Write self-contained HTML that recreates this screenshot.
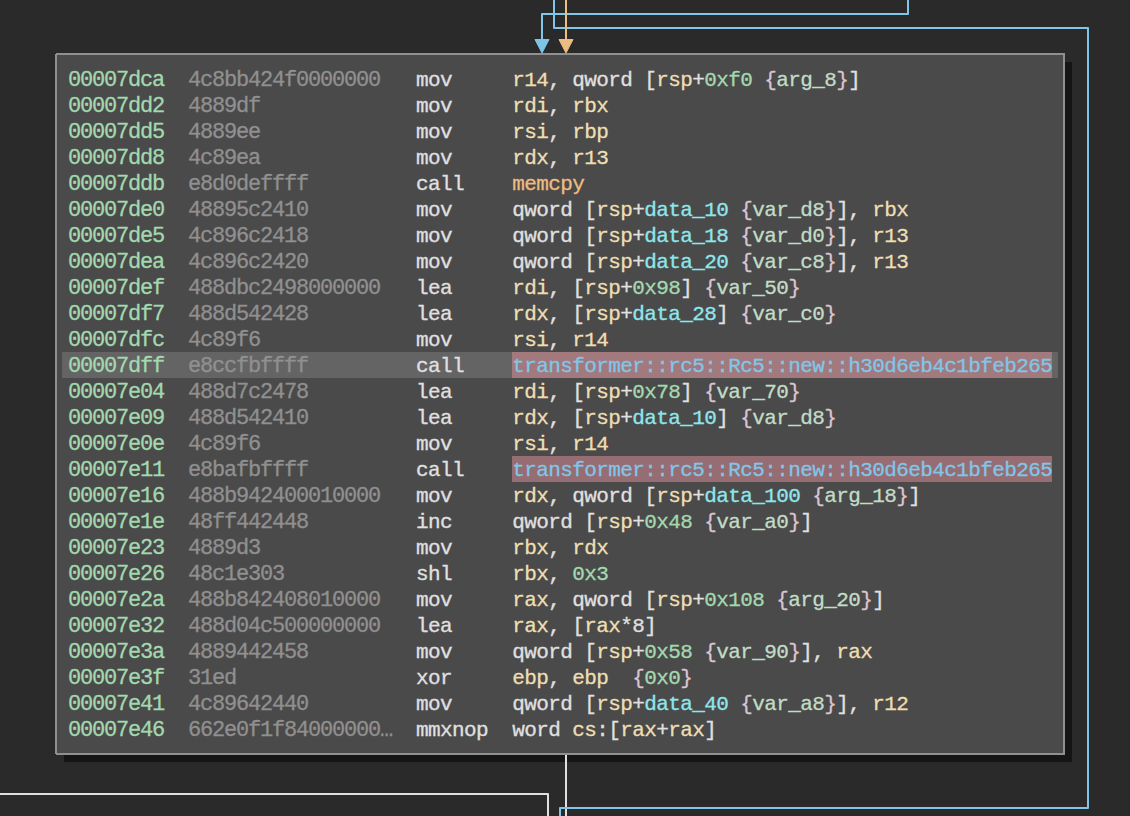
<!DOCTYPE html>
<html><head><meta charset="utf-8">
<style>
html,body{margin:0;padding:0;}
body{width:1130px;height:816px;overflow:hidden;background:#2a2a2a;position:relative;}
#edges{position:absolute;left:0;top:0;}
#shadow{position:absolute;left:64px;top:62px;width:1008px;height:700px;background:#151515;}
#box{position:absolute;left:55px;top:53px;width:1006px;height:698px;border:2px solid #909090;background:#4a4a4a;}
#hl{position:absolute;left:62px;top:352px;width:996px;height:26px;background:#646464;}
.hl2{position:absolute;left:512px;width:540px;height:26px;background:#a27a7e;}
#code{position:absolute;left:68px;top:68px;width:1000px;height:680px;}
.row{position:absolute;left:0;height:26px;line-height:26px;white-space:pre;font-family:"Liberation Mono",monospace;font-size:21px;letter-spacing:-0.6px;-webkit-text-stroke:0.3px currentColor;color:#e0e0e0;}
.a{color:#a2d9af;font-size:22px;letter-spacing:-1.2px}
.b{color:#909090;font-size:22px;letter-spacing:-1.2px}
.m{color:#e0e0e0}
.r{color:#eddfb3}
.t{color:#e0e0e0}
.n{color:#a2d9af}
.d{color:#8ee6ed}
.v{color:#c1dcc7}
.br{color:#dac4d1}
.i{color:#edbd81}
.c{color:#80c6e9}
</style></head><body>

<div id="shadow"></div>
<svg id="edges" width="1130" height="816" viewBox="0 0 1130 816">
<g fill="none" stroke-width="2" stroke-linejoin="round">
<path d="M566 754 V816" stroke="#e0e0e0"/>
<path d="M0 794 H548 V816" stroke="#e0e0e0"/>
<path d="M908 0 V14 H542 V46" stroke="#80c6e9"/>
<path d="M554 0 V28 H1088 V808 H560 V816" stroke="#80c6e9"/>
<path d="M566 0 V46" stroke="#edbd81"/>
</g>
<path d="M535 39.5 H549 L542 53 Z" fill="#7dc4e8" stroke="#80c6e9" stroke-width="1"/>
<path d="M559 39.5 H573 L566 53 Z" fill="#ebbd82" stroke="#edbd81" stroke-width="1"/>
</svg>
<div id="box"></div>
<div id="hl"></div>
<div style="position:absolute;left:55px;top:53px;width:1px;height:1px;background:#222"></div>
<div style="position:absolute;left:55px;top:754px;width:1px;height:1px;background:#222"></div>
<div class="hl2" style="top:352px"></div>
<div class="hl2" style="top:456px;background:#956d72"></div>
<div id="code">
<div class="row" style="top:0px"><span class="a">00007dca</span>  <span class="b">4c8bb424f0000000 </span>  <span class="m">mov     </span><span class="r">r14</span><span class="t">, qword [</span><span class="r">rsp</span><span class="t">+</span><span class="n">0xf0</span><span class="t"> </span><span class="br">{</span><span class="v">arg_8</span><span class="br">}</span><span class="t">]</span></div>
<div class="row" style="top:26px"><span class="a">00007dd2</span>  <span class="b">4889df           </span>  <span class="m">mov     </span><span class="r">rdi</span><span class="t">, </span><span class="r">rbx</span></div>
<div class="row" style="top:52px"><span class="a">00007dd5</span>  <span class="b">4889ee           </span>  <span class="m">mov     </span><span class="r">rsi</span><span class="t">, </span><span class="r">rbp</span></div>
<div class="row" style="top:78px"><span class="a">00007dd8</span>  <span class="b">4c89ea           </span>  <span class="m">mov     </span><span class="r">rdx</span><span class="t">, </span><span class="r">r13</span></div>
<div class="row" style="top:104px"><span class="a">00007ddb</span>  <span class="b">e8d0deffff       </span>  <span class="m">call    </span><span class="i">memcpy</span></div>
<div class="row" style="top:130px"><span class="a">00007de0</span>  <span class="b">48895c2410       </span>  <span class="m">mov     </span><span class="t">qword [</span><span class="r">rsp</span><span class="t">+</span><span class="d">data_10</span><span class="t"> </span><span class="br">{</span><span class="v">var_d8</span><span class="br">}</span><span class="t">], </span><span class="r">rbx</span></div>
<div class="row" style="top:156px"><span class="a">00007de5</span>  <span class="b">4c896c2418       </span>  <span class="m">mov     </span><span class="t">qword [</span><span class="r">rsp</span><span class="t">+</span><span class="d">data_18</span><span class="t"> </span><span class="br">{</span><span class="v">var_d0</span><span class="br">}</span><span class="t">], </span><span class="r">r13</span></div>
<div class="row" style="top:182px"><span class="a">00007dea</span>  <span class="b">4c896c2420       </span>  <span class="m">mov     </span><span class="t">qword [</span><span class="r">rsp</span><span class="t">+</span><span class="d">data_20</span><span class="t"> </span><span class="br">{</span><span class="v">var_c8</span><span class="br">}</span><span class="t">], </span><span class="r">r13</span></div>
<div class="row" style="top:208px"><span class="a">00007def</span>  <span class="b">488dbc2498000000 </span>  <span class="m">lea     </span><span class="r">rdi</span><span class="t">, [</span><span class="r">rsp</span><span class="t">+</span><span class="n">0x98</span><span class="t">] </span><span class="br">{</span><span class="v">var_50</span><span class="br">}</span></div>
<div class="row" style="top:234px"><span class="a">00007df7</span>  <span class="b">488d542428       </span>  <span class="m">lea     </span><span class="r">rdx</span><span class="t">, [</span><span class="r">rsp</span><span class="t">+</span><span class="d">data_28</span><span class="t">] </span><span class="br">{</span><span class="v">var_c0</span><span class="br">}</span></div>
<div class="row" style="top:260px"><span class="a">00007dfc</span>  <span class="b">4c89f6           </span>  <span class="m">mov     </span><span class="r">rsi</span><span class="t">, </span><span class="r">r14</span></div>
<div class="row" style="top:286px"><span class="a">00007dff</span>  <span class="b">e8ccfbffff       </span>  <span class="m">call    </span><span class="c">transformer::rc5::Rc5::new::h30d6eb4c1bfeb265</span></div>
<div class="row" style="top:312px"><span class="a">00007e04</span>  <span class="b">488d7c2478       </span>  <span class="m">lea     </span><span class="r">rdi</span><span class="t">, [</span><span class="r">rsp</span><span class="t">+</span><span class="n">0x78</span><span class="t">] </span><span class="br">{</span><span class="v">var_70</span><span class="br">}</span></div>
<div class="row" style="top:338px"><span class="a">00007e09</span>  <span class="b">488d542410       </span>  <span class="m">lea     </span><span class="r">rdx</span><span class="t">, [</span><span class="r">rsp</span><span class="t">+</span><span class="d">data_10</span><span class="t">] </span><span class="br">{</span><span class="v">var_d8</span><span class="br">}</span></div>
<div class="row" style="top:364px"><span class="a">00007e0e</span>  <span class="b">4c89f6           </span>  <span class="m">mov     </span><span class="r">rsi</span><span class="t">, </span><span class="r">r14</span></div>
<div class="row" style="top:390px"><span class="a">00007e11</span>  <span class="b">e8bafbffff       </span>  <span class="m">call    </span><span class="c">transformer::rc5::Rc5::new::h30d6eb4c1bfeb265</span></div>
<div class="row" style="top:416px"><span class="a">00007e16</span>  <span class="b">488b942400010000 </span>  <span class="m">mov     </span><span class="r">rdx</span><span class="t">, qword [</span><span class="r">rsp</span><span class="t">+</span><span class="d">data_100</span><span class="t"> </span><span class="br">{</span><span class="v">arg_18</span><span class="br">}</span><span class="t">]</span></div>
<div class="row" style="top:442px"><span class="a">00007e1e</span>  <span class="b">48ff442448       </span>  <span class="m">inc     </span><span class="t">qword [</span><span class="r">rsp</span><span class="t">+</span><span class="n">0x48</span><span class="t"> </span><span class="br">{</span><span class="v">var_a0</span><span class="br">}</span><span class="t">]</span></div>
<div class="row" style="top:468px"><span class="a">00007e23</span>  <span class="b">4889d3           </span>  <span class="m">mov     </span><span class="r">rbx</span><span class="t">, </span><span class="r">rdx</span></div>
<div class="row" style="top:494px"><span class="a">00007e26</span>  <span class="b">48c1e303         </span>  <span class="m">shl     </span><span class="r">rbx</span><span class="t">, </span><span class="n">0x3</span></div>
<div class="row" style="top:520px"><span class="a">00007e2a</span>  <span class="b">488b842408010000 </span>  <span class="m">mov     </span><span class="r">rax</span><span class="t">, qword [</span><span class="r">rsp</span><span class="t">+</span><span class="n">0x108</span><span class="t"> </span><span class="br">{</span><span class="v">arg_20</span><span class="br">}</span><span class="t">]</span></div>
<div class="row" style="top:546px"><span class="a">00007e32</span>  <span class="b">488d04c500000000 </span>  <span class="m">lea     </span><span class="r">rax</span><span class="t">, [</span><span class="r">rax</span><span class="t">*8]</span></div>
<div class="row" style="top:572px"><span class="a">00007e3a</span>  <span class="b">4889442458       </span>  <span class="m">mov     </span><span class="t">qword [</span><span class="r">rsp</span><span class="t">+</span><span class="n">0x58</span><span class="t"> </span><span class="br">{</span><span class="v">var_90</span><span class="br">}</span><span class="t">], </span><span class="r">rax</span></div>
<div class="row" style="top:598px"><span class="a">00007e3f</span>  <span class="b">31ed             </span>  <span class="m">xor     </span><span class="r">ebp</span><span class="t">, </span><span class="r">ebp</span><span class="t">  </span><span class="br">{</span><span class="n">0x0</span><span class="br">}</span></div>
<div class="row" style="top:624px"><span class="a">00007e41</span>  <span class="b">4c89642440       </span>  <span class="m">mov     </span><span class="t">qword [</span><span class="r">rsp</span><span class="t">+</span><span class="d">data_40</span><span class="t"> </span><span class="br">{</span><span class="v">var_a8</span><span class="br">}</span><span class="t">], </span><span class="r">r12</span></div>
<div class="row" style="top:650px"><span class="a">00007e46</span>  <span class="b">662e0f1f84000000…</span>  <span class="m">mmxnop  </span><span class="t">word </span><span class="r">cs</span><span class="t">:[</span><span class="r">rax</span><span class="t">+</span><span class="r">rax</span><span class="t">]</span></div>
</div>
</body></html>
